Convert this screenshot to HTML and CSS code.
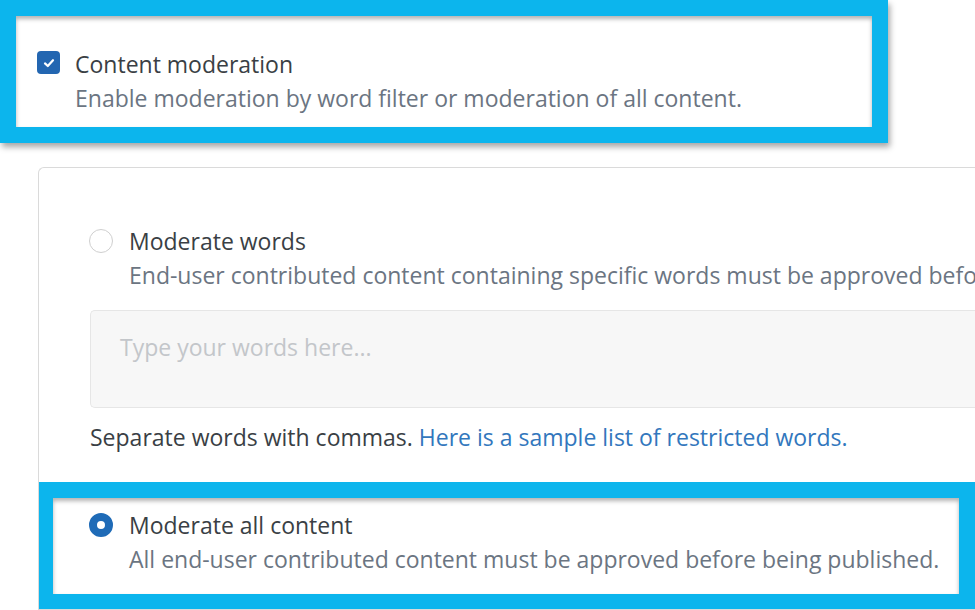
FILE: index.html
```html
<!DOCTYPE html>
<html lang="en">
<head>
<meta charset="utf-8">
<title>Content moderation</title>
<link rel="stylesheet" href="styles.css">
</head>
<body>
<div class="top-hl">
  <div class="option option-check">
    <span class="checkbox">
      <svg width="14" height="14" viewBox="0 0 14 14"><path d="M3 7.4 L5.8 10 L11 4.2" fill="none" stroke="#fff" stroke-width="2.2" stroke-linecap="round" stroke-linejoin="round"/></svg>
    </span>
    <div class="opt-text">
      <div class="opt-title">Content moderation</div>
      <div class="opt-desc">Enable moderation by word filter or moderation of all content.</div>
    </div>
  </div>
</div>
<div class="panel">
  <div class="option">
    <span class="radio"></span>
    <div class="opt-text">
      <div class="opt-title">Moderate words</div>
      <div class="opt-desc nowrap">End-user contributed content containing specific words must be approved before being published.</div>
    </div>
  </div>
  <div class="words">Type your words here...</div>
  <p class="help">Separate words with commas. <a class="link" href="#">Here is a sample list of restricted words.</a></p>
  <div class="bottom-hl">
    <div class="option">
      <span class="radio radio-on"></span>
      <div class="opt-text">
        <div class="opt-title">Moderate all content</div>
        <div class="opt-desc">All end-user contributed content must be approved before being published.</div>
      </div>
    </div>
  </div>
</div>
</body>
</html>
```

FILE: styles.css
```css
html, body {
  margin: 0;
  padding: 0;
  background: #fff;
  overflow: hidden;
  width: 975px;
  height: 610px;
}
body {
  font-family: "Open Sans", "Noto Sans", sans-serif;
  font-size: 23px;
  line-height: 34px;
  color: #3b4046;
}
.top-hl {
  width: 888px;
  height: 143px;
  box-sizing: border-box;
  border: 16px solid #0cb5ed;
  background: #fff;
  box-shadow: 2px 4px 6px rgba(0,0,0,0.35), inset 0 3px 4px rgba(0,0,0,0.3);
  padding: 31px 0 0 21px;
  position: relative;
  z-index: 2;
}
.option {
  display: flex;
  align-items: flex-start;
  gap: 16px;
}
.option-check {
  gap: 15px;
}
.checkbox {
  flex: none;
  width: 23px;
  height: 23px;
  margin-top: 4px;
  border-radius: 4px;
  background: #2366b1;
  display: flex;
  align-items: center;
  justify-content: center;
}
.radio {
  flex: none;
  width: 24px;
  height: 24px;
  margin-top: 5px;
  box-sizing: border-box;
  border: 1px solid #cfcfcf;
  border-radius: 50%;
  background: #fff;
}
.radio-on {
  border: 8px solid #1f6bb7;
  background: #fff;
}
.opt-title {
  color: #3a3f45;
}
.opt-desc {
  color: #6b7582;
}
.nowrap {
  white-space: nowrap;
}
.opt-text {
  min-width: 0;
}
.panel {
  margin: 24px 0 0 38px;
  width: 937px;
  height: 443px;
  box-sizing: border-box;
  border: 1px solid #dadada;
  border-right: 0;
  border-radius: 6px 0 0 0;
  padding: 56px 0 0 50px;
  overflow: hidden;
}
.words {
  margin: 18px 0 0 1px;
  height: 98px;
  box-sizing: border-box;
  background: #f7f7f7;
  border: 1px solid #e6e6e6;
  border-right: 0;
  border-radius: 5px 0 0 5px;
  padding: 19px 0 0 29px;
  color: #c3c6ca;
}
.help {
  margin: 12px 0 0 1px;
  color: #3a3f45;
}
.link {
  color: #3277bd;
  text-decoration: none;
}
.bottom-hl {
  margin: 28px 0 0 -52px;
  width: 938px;
  height: 128px;
  box-sizing: border-box;
  border: 16px solid #0cb5ed;
  background: #fff;
  box-shadow: inset 0 3px 4px rgba(0,0,0,0.3);
  padding: 10px 0 0 36px;
}
```
